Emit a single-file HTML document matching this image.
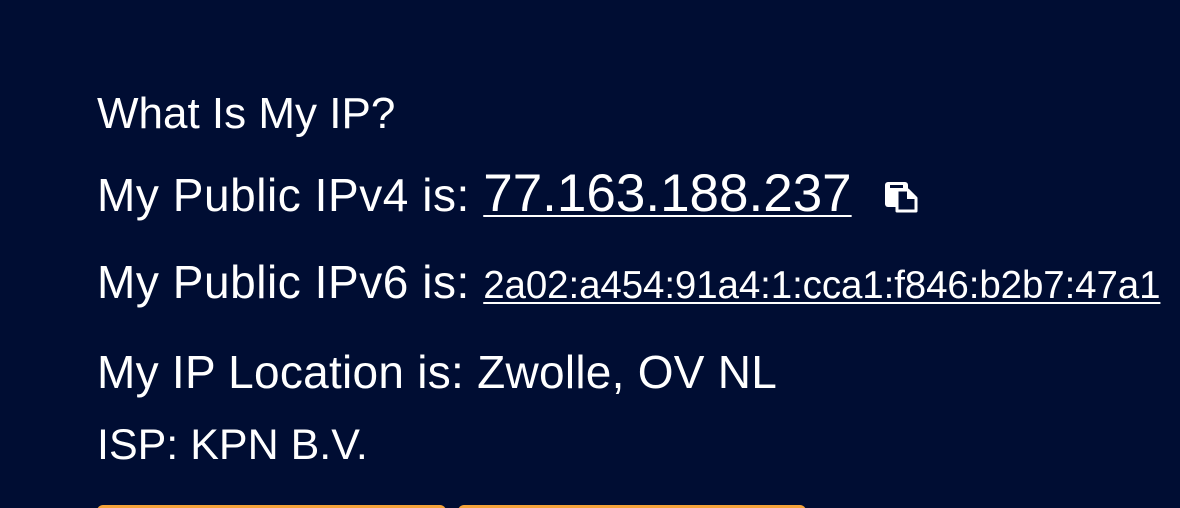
<!DOCTYPE html>
<html><head><meta charset="utf-8"><style>
html,body{margin:0;padding:0;background:#000d33;width:1180px;height:508px;overflow:hidden;}
body{font-family:"Liberation Sans",sans-serif;color:#fff;position:relative;}
.l{position:absolute;left:97px;line-height:1;white-space:nowrap;}
a{color:#fff;text-decoration:underline;text-decoration-thickness:2px;text-underline-offset:4px;letter-spacing:0;}
.btn{position:absolute;top:505px;height:20px;background:#f5a33a;border-radius:6px;}
</style></head><body>
<div class="l" style="top:92px;font-size:44px;">What Is My IP?</div>
<div class="l" style="top:167px;font-size:46px;letter-spacing:0.55px;">My Public IPv4 is: <a style="font-size:53px;">77.163.188.237</a></div>
<svg style="position:absolute;left:885px;top:181px" width="34" height="32" viewBox="0 0 34 32">
<rect x="0" y="1" width="23" height="25" rx="3" fill="#fff"/>
<rect x="5" y="4" width="13" height="3" fill="#000d33"/>
<path d="M12 9 H23 L31 17 V30 H12 Z" fill="#000d33" stroke="#fff" stroke-width="3" stroke-linejoin="round"/>
<path d="M22 9 V18 H31" fill="#fff"/>
</svg>
<div class="l" style="top:259px;font-size:46px;letter-spacing:0.55px;">My Public IPv6 is: <a style="font-size:38.5px;letter-spacing:-0.1px;">2a02:a454:91a4:1:cca1:f846:b2b7:47a1</a></div>
<div class="l" style="top:349px;font-size:46px;letter-spacing:0.27px;">My IP Location is: Zwolle, OV NL</div>
<div class="l" style="top:424px;font-size:43px;">ISP: KPN B.V.</div>
<div class="btn" style="left:97px;width:349px;"></div>
<div class="btn" style="left:458px;width:348px;"></div>
</body></html>
